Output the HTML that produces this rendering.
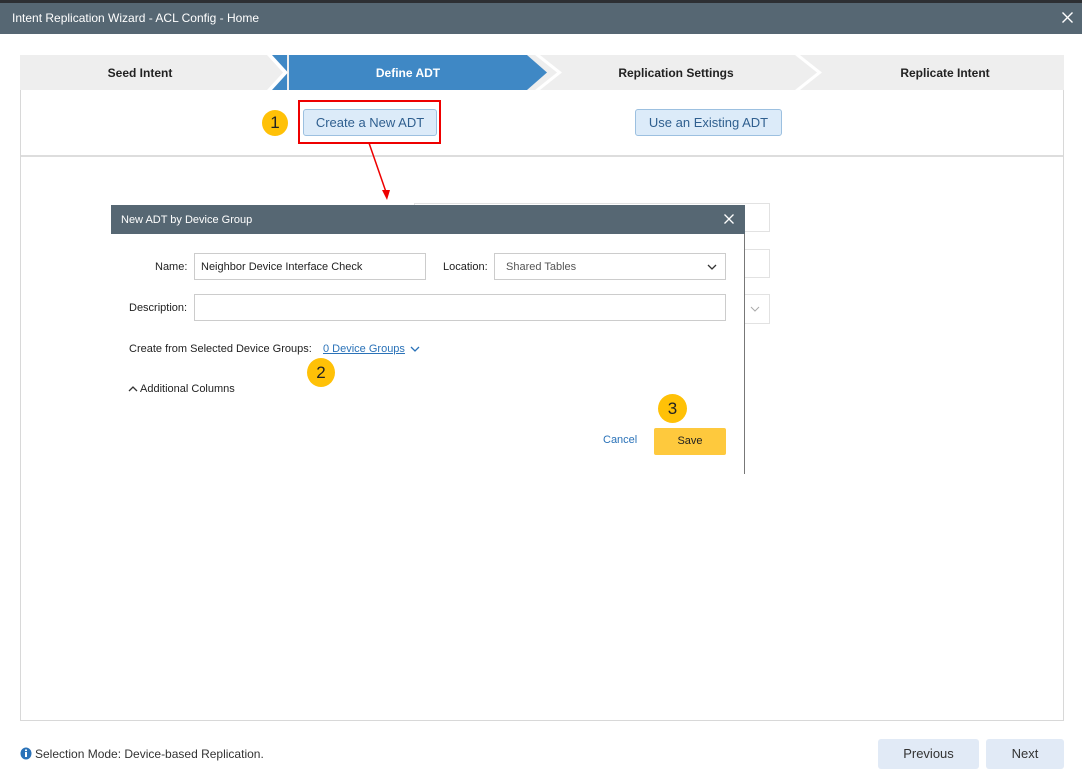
<!DOCTYPE html>
<html><head><style>
*{box-sizing:border-box;margin:0;padding:0}
body{width:1082px;height:775px;background:#fff;font-family:"Liberation Sans",sans-serif;position:relative;overflow:hidden;font-size:12px;color:#222}
.abs{position:absolute}
.btn{position:absolute;border:1px solid #9cc0e0;background:#dcebf9;border-radius:3px;color:#2f5f8f;font-size:13px;text-align:center}
.badge{position:absolute;width:26px;height:26px;border-radius:50%;background:#ffc107;font-size:17px;text-align:center;line-height:26px;color:#222}
.inp{position:absolute;border:1px solid #ccc;background:#fff;font-size:11px;padding-left:6px}
</style></head><body>
<div class="abs" style="left:0;top:0;width:1082px;height:3px;background:#2d2f33"></div>
<div class="abs" style="left:0;top:3px;width:1082px;height:31px;background:#566773;color:#fff;font-size:12px;line-height:30px;padding-left:12px">Intent Replication Wizard - ACL Config - Home</div>
<svg class="abs" style="left:1062px;top:12px" width="11" height="11"><path d="M0.5 0.5 L10.5 10.5 M10.5 0.5 L0.5 10.5" stroke="#fff" stroke-width="1.4"/></svg>

<div class="abs" style="left:20px;top:55px;width:1044px;height:666px;border:1px solid #d8d8d8;border-top:none"></div>
<svg class="abs" style="left:20px;top:55px" width="1044" height="35">
<rect x="0" y="0" width="1044" height="35" fill="#eeeeee"/>
<polygon points="249,0 267,0 267,35 249,35 267,17.5" fill="#3f88c5"/>
<rect x="269" y="0" width="238" height="35" fill="#3f88c5"/>
<polygon points="507,0 527,17.5 507,35" fill="#3f88c5"/>
<polygon points="515,0 520,0 542,17.5 520,35 515,35 537,17.5" fill="#fff"/>
<polygon points="775,0 780,0 802,17.5 780,35 775,35 797,17.5" fill="#fff"/>
<polygon points="247,0 252,0 268,17.5 252,35 247,35 263,17.5" fill="#fff"/>
<text x="120" y="22" font-size="12" font-weight="bold" fill="#222" text-anchor="middle" font-family="Liberation Sans">Seed Intent</text>
<text x="388" y="22" font-size="12" font-weight="bold" fill="#fff" text-anchor="middle" font-family="Liberation Sans">Define ADT</text>
<text x="656" y="22" font-size="12" font-weight="bold" fill="#222" text-anchor="middle" font-family="Liberation Sans">Replication Settings</text>
<text x="925" y="22" font-size="12" font-weight="bold" fill="#222" text-anchor="middle" font-family="Liberation Sans">Replicate Intent</text>
</svg>
<div class="abs" style="left:21px;top:155px;width:1042px;height:2px;background:#ddd"></div>

<div class="badge" style="left:262px;top:110px">1</div>
<div class="abs" style="left:298px;top:100px;width:143px;height:44px;border:2px solid #e00"></div>
<div class="btn" style="left:303px;top:109px;width:134px;height:27px;line-height:25px">Create a New ADT</div>
<div class="btn" style="left:635px;top:109px;width:147px;height:27px;line-height:25px">Use an Existing ADT</div>

<svg class="abs" style="left:360px;top:140px" width="40" height="70"><line x1="9" y1="3" x2="26" y2="52" stroke="#e00" stroke-width="1.5"/><polygon points="22,50 30,50 27,60" fill="#e00"/></svg>

<div class="abs" style="left:414px;top:203px;width:356px;height:29px;border:1px solid #e2e2e2"></div>
<div class="abs" style="left:414px;top:249px;width:356px;height:29px;border:1px solid #e2e2e2"></div>
<div class="abs" style="left:414px;top:294px;width:356px;height:30px;border:1px solid #e2e2e2"></div>
<svg class="abs" style="left:750px;top:306px" width="10" height="7"><path d="M1 1 L5 5 L9 1" stroke="#aaa" stroke-width="1" fill="none"/></svg>

<div class="abs" style="left:111px;top:205px;width:634px;height:269px;background:#fff;border-right:1px solid #777"></div>
<div class="abs" style="left:111px;top:205px;width:634px;height:29px;background:#566773;color:#fff;font-size:11px;line-height:30px;padding-left:10px">New ADT by Device Group</div>
<svg class="abs" style="left:724px;top:214px" width="10" height="10"><path d="M0.5 0.5 L9.5 9.5 M9.5 0.5 L0.5 9.5" stroke="#fff" stroke-width="1.3"/></svg>
<div class="abs" style="left:155px;top:261px;font-size:11px">Name:</div>
<div class="inp" style="left:194px;top:253px;width:232px;height:27px;line-height:26px">Neighbor Device Interface Check</div>
<div class="abs" style="left:443px;top:261px;font-size:11px">Location:</div>
<div class="inp" style="left:494px;top:253px;width:232px;height:27px;line-height:26px;color:#555;padding-left:11px">Shared Tables</div>
<svg class="abs" style="left:707px;top:263px" width="10" height="8"><path d="M1 2 L5 6 L9 2" stroke="#333" stroke-width="1.3" fill="none"/></svg>
<div class="abs" style="left:129px;top:302px;font-size:11px">Description:</div>
<div class="inp" style="left:194px;top:294px;width:532px;height:27px"></div>
<div class="abs" style="left:129px;top:343px;font-size:11px">Create from Selected Device Groups:</div>
<div class="abs" style="left:323px;top:343px;font-size:11px;color:#2a72b8;text-decoration:underline">0 Device Groups</div>
<svg class="abs" style="left:410px;top:345px" width="10" height="8"><path d="M1 2 L5 6 L9 2" stroke="#2a72b8" stroke-width="1.3" fill="none"/></svg>
<div class="badge" style="left:307px;top:358px;width:28px;height:29px;line-height:29px">2</div>
<svg class="abs" style="left:128px;top:385px" width="10" height="8"><path d="M1 6 L5 2 L9 6" stroke="#333" stroke-width="1.3" fill="none"/></svg>
<div class="abs" style="left:140px;top:383px;font-size:11px">Additional Columns</div>
<div class="badge" style="left:658px;top:394px;width:29px;height:29px;line-height:29px">3</div>
<div class="abs" style="left:603px;top:434px;font-size:11px;color:#2a72b8">Cancel</div>
<div class="abs" style="left:654px;top:428px;width:72px;height:27px;background:#fec93d;border-radius:2px;text-align:center;line-height:27px;font-size:11px">Save</div>

<svg class="abs" style="left:20px;top:747px" width="12" height="13"><ellipse cx="6" cy="6.5" rx="5.5" ry="6" fill="#2a72b8"/><rect x="5" y="5" width="2" height="5" fill="#fff"/><rect x="5" y="2.5" width="2" height="1.6" fill="#fff"/></svg>
<div class="abs" style="left:35px;top:747px;font-size:12px;color:#333">Selection Mode: Device-based Replication.</div>
<div class="abs" style="left:878px;top:739px;width:101px;height:30px;background:#e1eaf6;border-radius:3px;text-align:center;line-height:30px;font-size:13px;color:#333">Previous</div>
<div class="abs" style="left:986px;top:739px;width:78px;height:30px;background:#e1eaf6;border-radius:3px;text-align:center;line-height:30px;font-size:13px;color:#333">Next</div>
</body></html>
